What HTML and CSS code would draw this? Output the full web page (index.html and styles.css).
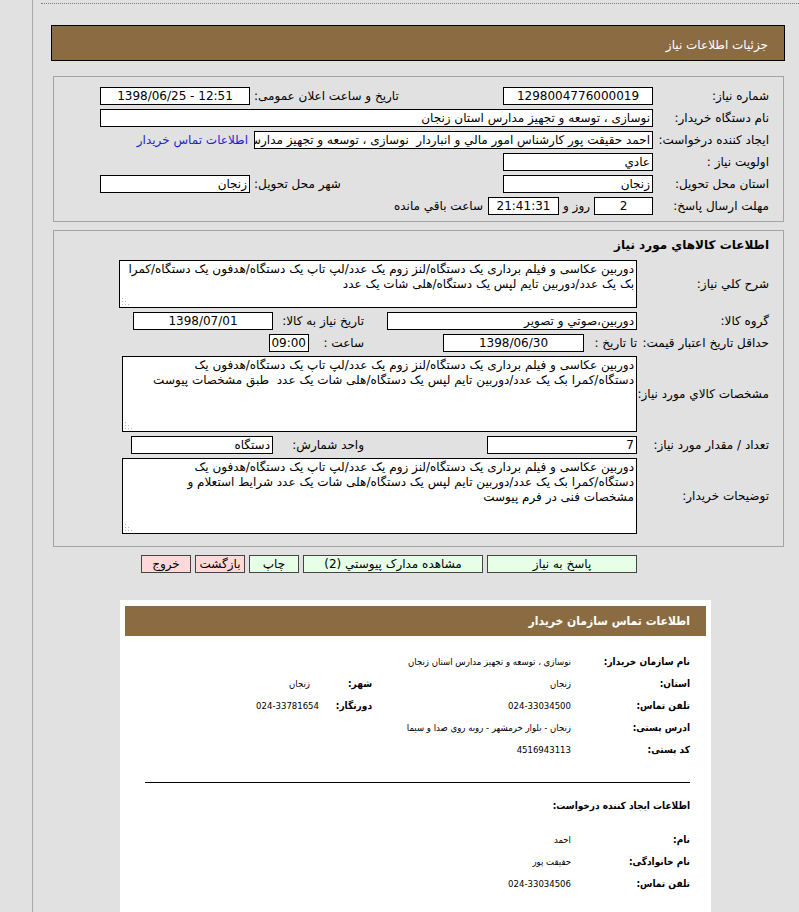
FILE: index.html
```html
<!DOCTYPE html>
<html lang="fa" dir="rtl">
<head>
<meta charset="utf-8">
<title>جزئیات اطلاعات نیاز</title>
<link rel="stylesheet" href="styles.css">
</head>
<body>
<div class="frame">
  <div class="dots"></div>
  <div class="titlebar">جزئیات اطلاعات نیاز</div>

  <div class="panel p1">
    <div class="g4">
      <div class="lbl">شماره نیاز:</div>
      <div class="fld c">1298004776000019</div>
      <div class="lbl end">تاریخ و ساعت اعلان عمومی:</div>
      <div class="fld c ltr">1398/06/25 - 12:51</div>

      <div class="lbl">نام دستگاه خریدار:</div>
      <div class="fld span3">نوسازی ، توسعه و تجهیز مدارس استان زنجان</div>

      <div class="lbl">ایجاد کننده درخواست:</div>
      <div class="fld span2 w399">احمد حقیقت پور کارشناس امور مالي و انباردار&nbsp; نوسازی ، توسعه و تجهیز مدارس</div>
      <a class="link" href="#">اطلاعات تماس خریدار</a>

      <div class="lbl">اولویت نیاز :</div>
      <div class="fld">عادي</div>
      <div class="empty span2"></div>

      <div class="lbl">استان محل تحویل:</div>
      <div class="fld">زنجان</div>
      <div class="lbl end">شهر محل تحویل:</div>
      <div class="fld">زنجان</div>

      <div class="lbl">مهلت ارسال پاسخ:</div>
      <div class="span3 inline">
        <div class="fld c w59">2</div>
        <span class="txt days">روز و</span>
        <div class="fld c w71">21:41:31</div>
        <span class="txt left">ساعت باقي مانده</span>
      </div>
    </div>
  </div>

  <div class="panel p2">
    <div class="ptitle">اطلاعات کالاهاي مورد نیاز</div>
    <div class="g5">
      <div class="lbl">شرح کلي نیاز:</div>
      <div class="ta span3 h48">
        <div class="tline">دوربین عکاسی و فیلم برداری یک دستگاه/لنز زوم یک عدد/لپ تاپ یک دستگاه/هدفون یک دستگاه/کمرا</div>
        <div class="tline">بک یک عدد/دوربین تایم لپس یک دستگاه/هلی شات یک عدد</div>
        <svg class="grip" width="7" height="7" viewBox="0 0 7 7"><g fill="#b5b5b5"><rect x="0" y="0" width="1" height="1"/><rect x="0" y="3" width="1" height="1"/><rect x="3" y="3" width="1" height="1"/><rect x="0" y="6" width="1" height="1"/><rect x="3" y="6" width="1" height="1"/><rect x="6" y="6" width="1" height="1"/></g></svg>
      </div>

      <div class="lbl">گروه کالا:</div>
      <div class="fld">دوربين،صوتي و تصوير</div>
      <div class="lbl mid">تاریخ نیاز به کالا:</div>
      <div class="fld c w140">1398/07/01</div>

      <div class="lbl">حداقل تاریخ اعتبار قیمت:</div>
      <div class="inline">
        <span class="txt tt">تا تاریخ :</span>
        <div class="fld c w141">1398/06/30</div>
      </div>
      <div class="span2 inline">
        <span class="lbl mid w78">ساعت :</span>
        <div class="fld c w40">09:00</div>
      </div>

      <div class="lbl">مشخصات کالاي مورد نیاز:</div>
      <div class="ta span3 h76 w515">
        <div class="tline">دوربین عکاسی و فیلم برداری یک دستگاه/لنز زوم یک عدد/لپ تاپ یک دستگاه/هدفون یک</div>
        <div class="tline">دستگاه/کمرا بک یک عدد/دوربین تایم لپس یک دستگاه/هلی شات یک عدد&nbsp; طبق مشخصات پیوست</div>
        <svg class="grip" width="7" height="7" viewBox="0 0 7 7"><g fill="#b5b5b5"><rect x="0" y="0" width="1" height="1"/><rect x="0" y="3" width="1" height="1"/><rect x="3" y="3" width="1" height="1"/><rect x="0" y="6" width="1" height="1"/><rect x="3" y="6" width="1" height="1"/><rect x="6" y="6" width="1" height="1"/></g></svg>
      </div>

      <div class="lbl">تعداد / مقدار مورد نیاز:</div>
      <div class="fld w150">7</div>
      <div class="lbl mid">واحد شمارش:</div>
      <div class="fld w142">دستگاه</div>

      <div class="lbl">توضیحات خریدار:</div>
      <div class="ta span3 h76 w515">
        <div class="tline">دوربین عکاسی و فیلم برداری یک دستگاه/لنز زوم یک عدد/لپ تاپ یک دستگاه/هدفون یک</div>
        <div class="tline">دستگاه/کمرا بک یک عدد/دوربین تایم لپس یک دستگاه/هلی شات یک عدد شرایط استعلام و</div>
        <div class="tline">مشخصات فنی در فرم پیوست</div>
        <svg class="grip" width="7" height="7" viewBox="0 0 7 7"><g fill="#b5b5b5"><rect x="0" y="0" width="1" height="1"/><rect x="0" y="3" width="1" height="1"/><rect x="3" y="3" width="1" height="1"/><rect x="0" y="6" width="1" height="1"/><rect x="3" y="6" width="1" height="1"/><rect x="6" y="6" width="1" height="1"/></g></svg>
      </div>
    </div>
  </div>

  <div class="buttons">
    <div class="btn w150">پاسخ به نیاز</div>
    <div class="btn w180">مشاهده مدارک پیوستي (2)</div>
    <div class="btn w50">چاپ</div>
    <div class="btn red w50">بازگشت</div>
    <div class="btn red w50">خروج</div>
  </div>

  <div class="card">
    <div class="cardhead">اطلاعات تماس سازمان خریدار</div>
    <div class="cgrid first">
      <div class="clbl">نام سازمان خریدار:</div>
      <div class="cval span3">نوسازی ، توسعه و تجهیز مدارس استان زنجان</div>

      <div class="clbl">استان:</div>
      <div class="cval">زنجان</div>
      <div class="clbl c3">شهر:</div>
      <div class="cval c4">زنجان</div>

      <div class="clbl">تلفن تماس:</div>
      <div class="cval">024-33034500</div>
      <div class="clbl c3">دورنگار:</div>
      <div class="cval">024-33781654</div>

      <div class="clbl">ادرس پستی:</div>
      <div class="cval span3">زنجان - بلوار خرمشهر - روبه روی صدا و سیما</div>

      <div class="clbl">کد پستی:</div>
      <div class="cval span3">4516943113</div>
    </div>
    <div class="hr"></div>
    <div class="csub">اطلاعات ایجاد کننده درخواست:</div>
    <div class="cgrid second">
      <div class="clbl">نام:</div>
      <div class="cval span3">احمد</div>

      <div class="clbl">نام خانوادگی:</div>
      <div class="cval span3">حقیقت پور</div>

      <div class="clbl">تلفن تماس:</div>
      <div class="cval span3">024-33034506</div>
    </div>
  </div>
</div>
</body>
</html>
```

FILE: styles.css
```css
html, body {
  margin: 0;
  padding: 0;
}
body {
  background: #e1e1e1;
  font-family: "DejaVu Sans", sans-serif;
  font-size: 12px;
  color: #000;
  direction: rtl;
}
.frame {
  margin-left: 32px;
  border-left: 1px solid #a9a9a9;
  min-height: 912px;
  padding-top: 3px;
  box-sizing: border-box;
  overflow: hidden;
}
.dots {
  margin-left: 8px;
  border-top: 1px dotted #7d7d7d;
}
.titlebar {
  margin: 21px 14px 0 18px;
  height: 34px;
  background: #8b6c42;
  border: 1px solid #000;
  color: #fff;
  padding-right: 16px;
  line-height: 38px;
  font-size: 12px;
}
.panel {
  margin: 15px 15px 0 20px;
  border: 1px solid #a4a4a4;
}
.p1 {
  padding: 10px 14px 6px 0;
}
.p2 {
  margin-top: 8px;
  padding: 6px 14px 12px 0;
}
.g4 {
  display: grid;
  grid-template-columns: 116px 150px 253px 150px;
  row-gap: 4px;
  align-items: center;
}
.g5 {
  display: grid;
  grid-template-columns: 132px 250px 114px 154px;
  row-gap: 4px;
  align-items: center;
}
.ptitle {
  font-weight: bold;
  line-height: 16px;
  margin-bottom: 7px;
}
.lbl {
  white-space: nowrap;
  line-height: 16px;
}
.lbl.end {
  text-align: left;
  padding-left: 4px;
}
.lbl.mid {
  padding-right: 23px;
}
.span2 { grid-column: span 2; }
.span3 { grid-column: span 3; }
.fld {
  background: #fff;
  border: 1px solid #000;
  height: 18px;
  box-sizing: border-box;
  line-height: 16px;
  padding: 0 2px;
  white-space: nowrap;
  overflow: hidden;
  font-size: 12px;
}
.fld.c { text-align: center; }
.fld.ltr { direction: ltr; }
.w399 { width: 399px; }
.w59 { width: 59px; }
.w71 { width: 71px; }
.w140 { width: 140px; }
.w141 { width: 141px; }
.w40 { width: 40px; }
.w150 { width: 150px; }
.w142 { width: 142px; }
.w180 { width: 180px; }
.w50 { width: 50px; }
.w515 { width: 515px; }
.w78 { width: 78px; box-sizing: border-box; }
.inline {
  display: flex;
  align-items: center;
}
.txt { white-space: nowrap; }
.days { margin: 0 4px; }
.left { margin-right: 5px; }
.tt { width: 53px; flex: none; }
.link {
  color: #1f1fc8;
  text-decoration: none;
  white-space: nowrap;
  padding-right: 2px;
}
.ta {
  position: relative;
  background: #fff;
  border: 1px solid #000;
  box-sizing: border-box;
  padding: 1px 2px 0 0;
  font-size: 12px;
  line-height: 15px;
  overflow: hidden;
}
.h48 { height: 48px; }
.h76 { height: 76px; }
.tline { white-space: nowrap; }
.grip {
  position: absolute;
  left: 2px;
  bottom: 2px;
}
.buttons {
  display: flex;
  gap: 4px;
  margin-top: 8px;
  padding-right: 162px;
}
.btn {
  height: 18px;
  box-sizing: border-box;
  border: 1px solid #444;
  background: #e6ffe6;
  line-height: 16px;
  text-align: center;
  white-space: nowrap;
  font-size: 12px;
}
.btn.red { background: #ffd9d9; }
.card {
  margin: 27px 88px 0 0;
  width: 591px;
  background: #fff;
  padding: 6px 0 30px;
  box-sizing: border-box;
  font-family: "DejaVu Sans Condensed", "DejaVu Sans", sans-serif;
  font-stretch: condensed;
}
.cardhead {
  margin: 0 5px;
  height: 30px;
  background: #8b6c42;
  color: #fff;
  font-weight: bold;
  font-size: 12px;
  line-height: 31px;
  padding-right: 16px;
}
.cgrid {
  display: grid;
  grid-template-columns: 116px 192px 60px auto;
  padding: 0 21px 0 25px;
  line-height: 22px;
}
.cgrid.first { margin-top: 15px; }
.cgrid.second { margin-top: 12px; }
.clbl {
  font-weight: bold;
  font-size: 10px;
  white-space: nowrap;
}
.clbl.c3 { padding-right: 10px; }
.cval {
  font-size: 9.5px;
  white-space: nowrap;
  padding-right: 3px;
}
.cval.c4 { padding-right: 12px; }
.hr {
  margin: 21px 21px 0 25px;
  border-top: 1px solid #000;
}
.csub {
  margin-top: 12px;
  padding-right: 21px;
  font-weight: bold;
  font-size: 10px;
  line-height: 22px;
}
```
